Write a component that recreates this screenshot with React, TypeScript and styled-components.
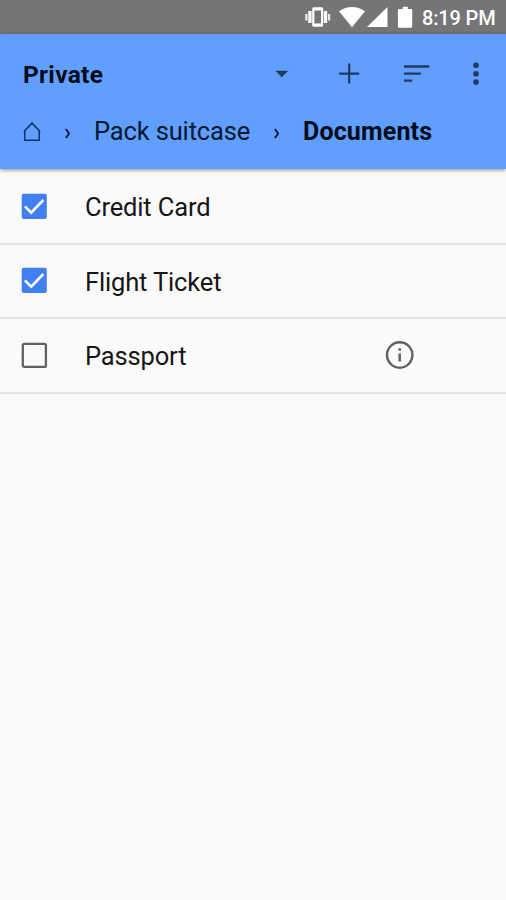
import React from 'react';
import styled, { createGlobalStyle } from 'styled-components';

const GlobalStyle = createGlobalStyle`
  * { box-sizing: border-box; }
  html, body { margin: 0; background: #fafafa; }
  body { font-family: Roboto, "Liberation Sans", sans-serif; overflow: hidden; }
  svg { display: block; flex: none; }
`;

const Screen = styled.div`
  display: flex;
  flex-direction: column;
  width: 506px;
  height: 900px;
  background: #fafafa;
`;

const StatusBar = styled.div`
  display: flex;
  align-items: center;
  justify-content: flex-end;
  flex: none;
  height: 34px;
  padding-right: 9px;
  background: #757575;
  color: #fff;
`;

const Clock = styled.span`
  width: 75px;
  margin-left: 9px;
  padding-top: 2px;
  font-size: 20px;
  font-weight: 500;
  line-height: 24px;
  letter-spacing: -0.15px;
  white-space: nowrap;
`;

const Header = styled.header`
  flex: none;
  height: 135px;
  background: #609fff;
  box-shadow: 0 1px 4px rgba(0, 0, 0, 0.45);
`;

const Toolbar = styled.div`
  display: flex;
  align-items: center;
  height: 79px;
  padding: 0 19px 0 23px;
`;

const Title = styled.h1`
  flex: 1;
  margin: 0;
  padding-top: 3px;
  color: #020b18;
  font-size: 24.5px;
  font-weight: 700;
  line-height: 30px;
  letter-spacing: 0.3px;
`;

const IconButton = styled.button<{ $gap?: number }>`
  display: block;
  margin: 0 0 0 ${(p) => p.$gap ?? 0}px;
  padding: 0;
  border: 0;
  background: none;
  color: #203a63;
`;

const Breadcrumbs = styled.nav`
  display: flex;
  align-items: center;
  height: 38px;
  padding-left: 22px;
  color: #06162d;
`;

const Crumb = styled.span<{ $width: number; $current?: boolean }>`
  width: ${(p) => p.$width}px;
  padding-bottom: ${(p) => (p.$current ? 0 : 2)}px;
  color: ${(p) => (p.$current ? '#020b18' : '#06182f')};
  font-size: ${(p) => (p.$current ? 25 : 25.5)}px;
  font-weight: ${(p) => (p.$current ? 700 : 400)};
  line-height: 30px;
  letter-spacing: ${(p) => (p.$current ? 0.15 : -0.15)}px;
  white-space: nowrap;
`;

const List = styled.ul`
  margin: 0;
  padding: 1px 0 0;
  list-style: none;
`;

const Row = styled.li`
  display: flex;
  align-items: center;
  height: 74.5px;
  padding-left: 21px;
  border-bottom: 2px solid #e4e4e4;
`;

const Label = styled.span`
  width: 300px;
  margin-left: 37px;
  padding-top: 2.4px;
  color: #161616;
  font-size: 25.5px;
  line-height: 30px;
  letter-spacing: -0.15px;
`;

const VibrateIcon = () => (
  <svg width="28" height="22" viewBox="0 0 28 22" fill="#fff">
    <rect x="1.2" y="8" width="2.3" height="6.5" opacity=".85" />
    <rect x="4.2" y="5" width="3.4" height="12" opacity=".95" />
    <rect x="19.8" y="5" width="3.4" height="12" opacity=".95" />
    <rect x="23.9" y="8" width="2.3" height="6.5" opacity=".85" />
    <path fillRule="evenodd" d="M9.8 1.2h7.8a1.6 1.6 0 0 1 1.6 1.6v16.4a1.6 1.6 0 0 1-1.6 1.6H9.8a1.6 1.6 0 0 1-1.6-1.6V2.8a1.6 1.6 0 0 1 1.6-1.6zM10.4 4.6v12.8H17V4.6z" />
  </svg>
);

const WifiIcon = () => (
  <svg width="35" height="22" viewBox="0 0 35 22" fill="#fff">
    <path d="M7 5.3Q13 1 20 1t13 4.3L20 21.3z" />
  </svg>
);

const SignalIcon = () => (
  <svg width="21" height="22" viewBox="0 0 21 22" fill="#fff">
    <path d="M20.5 1v20H0z" />
  </svg>
);

const BatteryIcon = () => (
  <svg width="25" height="22" viewBox="0 0 25 22" fill="#fff">
    <path d="M14.8.8h5v2.2h3.4a1 1 0 0 1 1 1v16.8a1 1 0 0 1-1 1H10.9a1 1 0 0 1-1-1V4a1 1 0 0 1 1-1h3.9z" />
  </svg>
);

const CaretIcon = () => (
  <svg width="14" height="30" viewBox="0 0 14 30" fill="currentColor">
    <path d="M.4 11.8h12.8L6.8 18.3z" />
  </svg>
);

const PlusIcon = () => (
  <svg width="22" height="30" viewBox="0 0 22 30" fill="none" stroke="currentColor" strokeWidth="2.2">
    <path d="M1.2 14.6h20M11.2 4.6v20" />
  </svg>
);

const SortIcon = () => (
  <svg width="26" height="30" viewBox="0 0 26 30" fill="none" stroke="currentColor" strokeWidth="2.3">
    <path d="M0 7.5h25.3M0 14.7h16.8M0 21.6h8.2" />
  </svg>
);

const MoreIcon = () => (
  <svg width="22" height="30" viewBox="0 0 22 30" fill="currentColor">
    <circle cx="11" cy="6.2" r="2.8" />
    <circle cx="11" cy="14.7" r="2.8" />
    <circle cx="11" cy="23.1" r="2.8" />
  </svg>
);

const HomeIcon = () => (
  <svg width="20" height="22" viewBox="0 0 20 22" fill="none" stroke="#12305c" strokeWidth="1.5">
    <path d="M2.7 19.3V9.7L10 2.2l7.3 7.5v9.6z" />
    <path d="M1.6 10.5 10 1.9l8.4 8.6" strokeWidth="1" />
  </svg>
);

const ChevronIcon = () => (
  <svg width="52" height="22" viewBox="0 0 52 22" fill="none" stroke="currentColor" strokeWidth="1.8">
    <path d="m23.9 7.9 3.2 4.6-3.2 4.6" />
  </svg>
);

const Checkbox = ({ checked }: { checked: boolean }) => (
  <svg width="27" height="27" viewBox="0 0 27 27" role="checkbox" aria-checked={checked}>
    {checked ? (
      <>
        <rect x=".7" y=".8" width="25.1" height="25.3" rx="2" fill="#4080f0" />
        <path d="m3.9 13.4 6.3 6.2L22.4 7" fill="none" stroke="#fff" strokeWidth="2.6" />
      </>
    ) : (
      <rect x="1.8" y="1.8" width="23.1" height="23.1" rx="1.5" fill="none" stroke="#616161" strokeWidth="2.3" />
    )}
  </svg>
);

const InfoIcon = () => (
  <svg width="30" height="30" viewBox="0 0 30 30">
    <circle cx="14.7" cy="15" r="12.7" fill="none" stroke="#606060" strokeWidth="2.4" />
    <path d="M14.7 13.4v8.2M14.7 8.2v2.6" stroke="#606060" strokeWidth="2.5" />
  </svg>
);

const items = [
  { label: 'Credit Card', checked: true, info: false },
  { label: 'Flight Ticket', checked: true, info: false },
  { label: 'Passport', checked: false, info: true },
];

export default function App() {
  return (
    <Screen>
      <GlobalStyle />
      <StatusBar>
        <VibrateIcon />
        <WifiIcon />
        <SignalIcon />
        <BatteryIcon />
        <Clock>8:19 PM</Clock>
      </StatusBar>
      <Header>
        <Toolbar>
          <Title>Private</Title>
          <IconButton aria-label="Choose list"><CaretIcon /></IconButton>
          <IconButton aria-label="Add" $gap={49}><PlusIcon /></IconButton>
          <IconButton aria-label="Sort" $gap={44}><SortIcon /></IconButton>
          <IconButton aria-label="More" $gap={35}><MoreIcon /></IconButton>
        </Toolbar>
        <Breadcrumbs>
          <HomeIcon />
          <ChevronIcon />
          <Crumb $width={157}>Pack suitcase</Crumb>
          <ChevronIcon />
          <Crumb $width={150} $current>Documents</Crumb>
        </Breadcrumbs>
      </Header>
      <List>
        {items.map((item) => (
          <Row key={item.label}>
            <Checkbox checked={item.checked} />
            <Label>{item.label}</Label>
            {item.info && <InfoIcon />}
          </Row>
        ))}
      </List>
    </Screen>
  );
}
